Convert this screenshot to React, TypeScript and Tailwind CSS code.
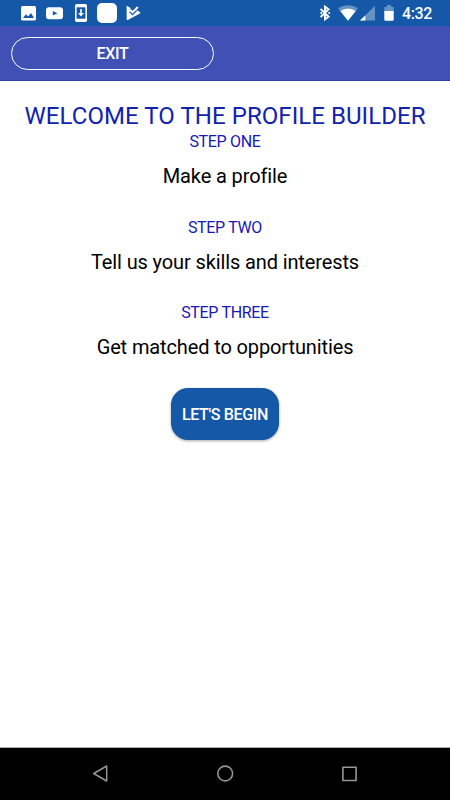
import React from 'react';

const steps = [
    { label: 'STEP ONE', text: 'Make a profile' },
    { label: 'STEP TWO', text: 'Tell us your skills and interests' },
    { label: 'STEP THREE', text: 'Get matched to opportunities' },
];

const StatusBar: React.FC = () => (
    <div className="h-[26px] bg-[#1558a7] flex items-center justify-between pl-[21px] pr-[17px] text-white">
        <div className="flex items-center">
            {/* Picture */}
            <svg width="15" height="15" viewBox="0 0 15 15">
                <rect width="15" height="14.5" rx="1.5" fill="#fff" />
                <path d="M2 12 L5 8.2 L7.2 10.4 L10 7 L13 12 Z" fill="#1558a7" />
            </svg>
            {/* Video */}
            <svg className="ml-[10px]" width="17" height="13" viewBox="0 0 17 13">
                <rect y="0.3" width="17" height="12" rx="3" fill="#fff" />
                <path d="M6.8 4 L11.4 6.3 L6.8 8.6 Z" fill="#1558a7" />
            </svg>
            {/* Phone download */}
            <svg className="ml-3" width="12" height="18" viewBox="0 0 12 18">
                <rect width="12" height="18" rx="1.8" fill="#fff" />
                <rect x="1.6" y="3.3" width="8.8" height="11.4" fill="#1558a7" />
                <path d="M5.2 5 h1.6 v4 h2.2 L6 12.6 L3 9 h2.2 Z" fill="#fff" />
            </svg>
            <div className="ml-[10px] w-5 h-5 rounded-[5px] bg-white" />
            {/* Play store check */}
            <svg className="ml-[9px]" width="15" height="16" viewBox="0 0 15 16">
                <path d="M0.6 0.8 L4.6 3 L4.3 5.2 L7 8 L10.5 4.8 L14 7.2 Q14.8 8 13.9 8.6 L1.8 15 Q0.6 15.4 0.7 14 Z" fill="#fff" />
                <path d="M4.4 5 L6.8 7.2 L11.8 2" fill="none" stroke="#fff" strokeWidth="1.9" />
                <path d="M3.6 6.8 L6.6 9.6 L10.8 5.3" fill="none" stroke="#1558a7" strokeWidth="1.2" />
            </svg>
        </div>
        <div className="flex items-center">
            {/* Bluetooth */}
            <svg width="11" height="16" viewBox="0 0 11 16">
                <path d="M0.6 4 L8.6 11.7 L5 14.4 V1.6 L8.6 4.3 L0.6 12" fill="none" stroke="#fff" strokeWidth="1.9" />
                <circle cx="1.2" cy="8" r="1" fill="#fff" />
                <circle cx="9.2" cy="8" r="1" fill="#fff" />
            </svg>
            {/* Wi-Fi */}
            <svg className="ml-[7px]" width="20" height="16" viewBox="0 0 20 16">
                <path d="M10 15.8 L0.2 3.5 Q4.5 0.3 10 0.3 T19.8 3.5 Z" fill="#fff" fillOpacity="0.35" />
                <path d="M10 15.8 L2.3 6.1 Q5.5 3.5 10 3.5 T17.7 6.1 Z" fill="#fff" />
            </svg>
            {/* Signal */}
            <svg className="ml-[2px]" width="15" height="16" viewBox="0 0 15 16">
                <path d="M0 15.6 L15 0.8 V15.6 Z" fill="#fff" fillOpacity="0.35" />
                <path d="M0 15.6 L5.3 10.4 V15.6 Z" fill="#fff" />
            </svg>
            {/* Battery */}
            <svg className="ml-[9px]" width="10" height="16" viewBox="0 0 10 16">
                <path d="M0.3 6.2 V3 Q0.3 1.7 1.6 1.7 H3 V0 H7 V1.7 H8.4 Q9.7 1.7 9.7 3 V6.2 Z" fill="#fff" fillOpacity="0.35" />
                <path d="M0.3 6 H9.7 V14.5 Q9.7 15.8 8.5 15.8 H1.5 Q0.3 15.8 0.3 14.5 Z" fill="#fff" />
            </svg>
            <span className="ml-2 w-[31px] whitespace-nowrap text-[16px] tracking-[-0.4px] leading-[26px] font-medium pt-[2px]">4:32</span>
        </div>
    </div>
);

const NavBar: React.FC = () => (
    <div className="h-[53px] bg-black border-t border-[#a9a9a9] flex items-center justify-between pl-[92px] pr-[92px] pb-px">
        <svg width="16" height="17" viewBox="0 0 16 17" fill="none" stroke="#969696" strokeWidth="1.5" strokeLinejoin="round">
            <path d="M1.7 8.5 L14.7 1 V16 Z" />
        </svg>
        <svg width="17" height="17" viewBox="0 0 17 17" fill="none" stroke="#969696" strokeWidth="1.6">
            <circle cx="8.2" cy="8.5" r="7.4" />
        </svg>
        <svg width="16" height="16" viewBox="0 0 16 16" fill="none" stroke="#969696" strokeWidth="1.6" strokeLinejoin="round">
            <rect x="0.9" y="1.3" width="13.2" height="13.2" />
        </svg>
    </div>
);

const App: React.FC = () => {
    return (
        <div className="w-[450px] h-[800px] flex flex-col bg-white overflow-hidden font-['Roboto',sans-serif]">
            <StatusBar />
            <header className="h-[55px] bg-[#3f51b5] border-b border-[#2a3daf] pl-[11px] pt-[11px]">
                <button className="w-[203px] h-[33px] rounded-full border-[1.5px] border-white text-white text-[16px] tracking-[-0.35px] font-medium flex items-center justify-center pt-px">
                    EXIT
                </button>
            </header>

            <main className="flex-1 flex flex-col items-center pt-5 text-center">
                <h1 className="text-[24px] leading-[30px] tracking-[0.06px] text-[#1023b0] whitespace-nowrap">WELCOME TO THE PROFILE BUILDER</h1>
                {steps.map((step) => (
                    <section key={step.label} className="h-[85.7px] pt-px">
                        <h2 className="text-[16px] tracking-[-0.33px] leading-5 text-[#1818b4]">{step.label}</h2>
                        <p className="mt-2.5 text-[20px] leading-7 tracking-[-0.12px] text-black">{step.text}</p>
                    </section>
                ))}
                <button className="w-[108px] h-[52px] rounded-[17px] bg-[#1558a7] text-white text-[16px] tracking-[-0.35px] font-medium whitespace-nowrap pt-px shadow-[0_1px_3px_rgba(0,0,0,0.35)]">
                    LET'S BEGIN
                </button>
            </main>

            <NavBar />
        </div>
    );
};

export default App;
